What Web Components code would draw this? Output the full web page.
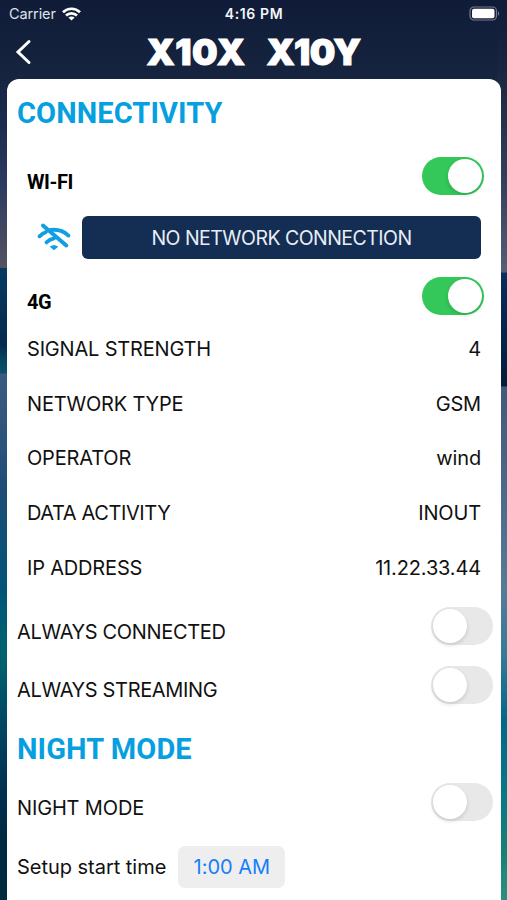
<!DOCTYPE html>
<html lang="en">
<head>
<meta charset="utf-8">
<title>Connectivity</title>
<style>
  html, body {
    margin: 0;
    height: 100%;
    overflow: hidden;
  }
  body {
    font-family: Inter, "Liberation Sans", sans-serif;
    color: #111;
  }
</style>
</head>
<body>
<app-screen>
  <status-bar slot="top" carrier="Carrier" time="4:16 PM"></status-bar>
  <nav-header slot="top"><span style="letter-spacing: 0.5px">X10X</span><span>X10Y</span></nav-header>

  <section-title style="height: 68px">CONNECTIVITY</section-title>
  <switch-row class="device" on>WI-FI</switch-row>
  <network-banner>NO NETWORK CONNECTION</network-banner>
  <switch-row class="device short" on>4G</switch-row>
  <info-row value="4">SIGNAL STRENGTH</info-row>
  <info-row value="GSM">NETWORK TYPE</info-row>
  <info-row value="wind">OPERATOR</info-row>
  <info-row value="INOUT" style="letter-spacing: -0.4px">DATA ACTIVITY</info-row>
  <info-row value="11.22.33.44">IP ADDRESS</info-row>
  <switch-row style="margin-top: 2px; letter-spacing: -0.35px">ALWAYS CONNECTED</switch-row>
  <switch-row style="letter-spacing: -0.35px">ALWAYS STREAMING</switch-row>
  <section-title style="height: 58.6px; --drop: 11px">NIGHT MODE</section-title>
  <switch-row>NIGHT MODE</switch-row>
  <time-row value="1:00 AM">Setup start time</time-row>
</app-screen>

<script>
class AppScreen extends HTMLElement {
  constructor() {
    super();
    this.attachShadow({ mode: 'open' });
    this.shadowRoot.innerHTML = `
      <style>
        :host {
          display: flex;
          flex-direction: column;
          height: 900px;
          /* left edge, right edge, header */
          background:
            linear-gradient(#101c38 0, #15233f 70px, #1c2d50 130px, #2b3b62 185px, #45495f 235px, #535460 268px,
              #083a61 268px, #06294f 345px, #064862 362px, #0b4f6a 373px, #3a5a80 374px, #30557c 430px, #1d4c76 490px,
              #005577 590px, #00636f 655px, #004a66 715px, #00304f 790px, #00283f 850px, #002b3c 900px) left / 10px 100% no-repeat,
            linear-gradient(#101c38 0, #18263f 70px, #27344f 130px, #35425f 190px, #4c5570 245px, #555f78 272px,
              #0a2d5c 273px, #07264f 320px, #031c3d 386px, #41597c 387px, #4c678a 480px, #567b99 590px, #357b96 655px,
              #00688a 720px, #087a85 800px, #168078 850px, #2b9080 900px) right / 10px 100% no-repeat,
            linear-gradient(#101c37 0, #15233f 70px, #182744 100px);
        }
        .card {
          flex: 1;
          display: flex;
          flex-direction: column;
          margin: 0 6px 0 7px;
          border-radius: 12px 12px 0 0;
          background: #fff;
          overflow: hidden;
        }
      </style>
      <slot name="top"></slot>
      <div class="card"><slot></slot></div>
`;
  }
}

class StatusBar extends HTMLElement {
  constructor() {
    super();
    this.attachShadow({ mode: 'open' });
    this.shadowRoot.innerHTML = `
      <style>
        :host {
          display: grid;
          grid-template-columns: 1fr auto 1fr;
          align-items: center;
          height: 27px;
          padding: 0 7px 0 9px;
          color: #f4f6fa;
          font-size: 14.5px;
        }
        .left {
          display: flex;
          align-items: center;
          gap: 6px;
          color: #dfe3ea;
          letter-spacing: -0.1px;
        }
        .time {
          margin-right: 1px;
          font-size: 14px;
          font-weight: 600;
          letter-spacing: 0.6px;
        }
        .battery {
          justify-self: end;
        }
        svg {
          display: block;
        }
      </style>
      <div class="left">
        <span class="carrier"></span>
        <svg width="19" height="14" viewBox="0 0 19 14" fill="none" stroke="#fff" stroke-width="2.7">
          <path d="M1 5.2C5.8.6 13.2.6 18 5.2M4 8.6C7.2 5.6 11.8 5.6 15 8.6"/>
          <path d="M9.5 13.6 6.4 10.6C8.2 9.1 10.8 9.1 12.6 10.6Z" fill="#fff" stroke="none"/>
        </svg>
      </div>
      <span class="time"></span>
      <svg class="battery" width="31" height="15" viewBox="0 0 31 15">
        <rect x="1" y="1" width="26.5" height="13" rx="4" fill="none" stroke="#747b8c" stroke-width="1.2"/>
        <rect x="3" y="2.7" width="22.5" height="9.6" rx="2" fill="#fff"/>
        <path d="M29 5.2c1.6.7 1.6 3.9 0 4.6z" fill="#747b8c"/>
      </svg>
`;
  }

  connectedCallback() {
    this.shadowRoot.querySelector('.carrier').textContent = this.getAttribute('carrier');
    this.shadowRoot.querySelector('.time').textContent = this.getAttribute('time');
  }
}

class NavHeader extends HTMLElement {
  constructor() {
    super();
    this.attachShadow({ mode: 'open' });
    this.shadowRoot.innerHTML = `
      <style>
        :host {
          display: grid;
          grid-template-columns: 40px 1fr 40px;
          align-items: center;
          height: 52px;
        }
        svg {
          margin: -2px 0 0 15px;
        }
        .names {
          display: flex;
          justify-content: center;
          gap: 21px;
          color: #fff;
          font-size: 36px;
          line-height: 50px;
          height: 52px;
          font-weight: 900;
          letter-spacing: -0.7px;
          -webkit-text-stroke: 1px #fff;
        }
      </style>
      <svg width="18" height="26" viewBox="0 0 18 26" fill="none" stroke="#fff" stroke-width="3" stroke-linecap="round">
        <path d="M14 2.5 3 13 14 23.5"/>
      </svg>
      <div class="names"><slot></slot></div>
`;
  }
}

class SectionTitle extends HTMLElement {
  constructor() {
    super();
    this.attachShadow({ mode: 'open' });
    this.shadowRoot.innerHTML = `
      <style>
        :host {
          display: flex;
          align-items: center;
          box-sizing: border-box;
          flex: none;
          padding: var(--drop, 0) 10px 0;
          color: #069fe0;
          font-family: Roboto, sans-serif;
          font-size: 29px;
          font-weight: 700;
          letter-spacing: 0.1px;
        }
      </style>
      <slot></slot>
`;
  }
}

class ToggleSwitch extends HTMLElement {
  constructor() {
    super();
    this.attachShadow({ mode: 'open' });
    this.shadowRoot.innerHTML = `
      <style>
        :host {
          display: flex;
          align-items: center;
          box-sizing: border-box;
          width: 62.5px;
          height: 38px;
          padding: 0 2px;
          border-radius: 19px;
          background: #e8e8e9;
        }
        :host([on]) {
          justify-content: flex-end;
          background: #34c759;
        }
        i {
          width: 34px;
          height: 34px;
          border-radius: 50%;
          background: #fff;
          box-shadow: 0 2px 4px rgba(0, 0, 0, 0.14);
        }
      </style>
      <i></i>
`;
  }
}

class SwitchRow extends HTMLElement {
  constructor() {
    super();
    this.attachShadow({ mode: 'open' });
    this.shadowRoot.innerHTML = `
      <style>
        :host {
          display: flex;
          align-items: center;
          justify-content: space-between;
          flex: none;
          box-sizing: border-box;
          height: 58.6px;
          padding: 0 8px 0 10px;
          font-size: 20px;
          letter-spacing: -0.15px;
        }
        span {
          padding-top: 11px;
        }
        :host(.device) {
          height: 58px;
          padding: 0 17px 0 20px;
          color: #000;
          font-family: Roboto, sans-serif;
          font-weight: 700;
          letter-spacing: -0.4px;
        }
        :host(.short) {
          height: 54px;
          padding-top: 4px;
        }
      </style>
      <span><slot></slot></span>
      <toggle-switch></toggle-switch>
`;
  }

  connectedCallback() {
    this.shadowRoot.querySelector('toggle-switch').toggleAttribute('on', this.hasAttribute('on'));
  }
}

class NetworkBanner extends HTMLElement {
  constructor() {
    super();
    this.attachShadow({ mode: 'open' });
    this.shadowRoot.innerHTML = `
      <style>
        :host {
          display: flex;
          align-items: center;
          flex: none;
          box-sizing: border-box;
          gap: 10px;
          height: 62px;
          padding: 2px 20px 0 29px;
        }
        div {
          flex: 1;
          height: 43px;
          line-height: 44px;
          border-radius: 6px;
          background: #142d52;
          color: #e8edf6;
          text-align: center;
          font-size: 19.5px;
          letter-spacing: -0.53px;
        }
      </style>
      <svg width="36" height="30" viewBox="0 0 36 30" fill="none" stroke="#109fe2" stroke-width="3.8" stroke-linecap="round">
        <path d="M3.5 14.3C5.5 12.3 7.5 11 10 10M14.5 8C21.5 7 27.5 9 32.5 13.6"/>
        <path d="M10.5 20.4C12.6 18.4 15 17 18 16.4"/>
        <path d="M7 3.6 30.3 23.5" stroke-width="4"/>
        <path d="M18 28.3 13.8 24.8C16 22.8 20 22.8 22.2 24.8Z" fill="#109fe2" stroke="none"/>
      </svg>
      <div><slot></slot></div>
`;
  }
}

class InfoRow extends HTMLElement {
  constructor() {
    super();
    this.attachShadow({ mode: 'open' });
    this.shadowRoot.innerHTML = `
      <style>
        :host {
          display: flex;
          align-items: center;
          justify-content: space-between;
          flex: none;
          box-sizing: border-box;
          height: 54.8px;
          padding: 1px 20px 0;
          font-size: 20px;
          letter-spacing: -0.18px;
        }
        .value {
          letter-spacing: -0.15px;
        }
      </style>
      <slot></slot>
      <span class="value"></span>
`;
  }

  connectedCallback() {
    this.shadowRoot.querySelector('.value').textContent = this.getAttribute('value');
  }
}

class TimeRow extends HTMLElement {
  constructor() {
    super();
    this.attachShadow({ mode: 'open' });
    this.shadowRoot.innerHTML = `
      <style>
        :host {
          display: flex;
          align-items: center;
          flex: none;
          gap: 12px;
          height: 71px;
          padding: 0 10px;
          font-size: 20px;
          letter-spacing: -0.03px;
        }
        button {
          width: 107px;
          height: 42px;
          padding: 0;
          border: 0;
          border-radius: 7px;
          background: #eeeeef;
          color: #147efb;
          font: inherit;
          letter-spacing: inherit;
        }
      </style>
      <slot></slot>
      <button></button>
`;
  }

  connectedCallback() {
    this.shadowRoot.querySelector('button').textContent = this.getAttribute('value');
  }
}

customElements.define('app-screen', AppScreen);
customElements.define('status-bar', StatusBar);
customElements.define('nav-header', NavHeader);
customElements.define('section-title', SectionTitle);
customElements.define('toggle-switch', ToggleSwitch);
customElements.define('switch-row', SwitchRow);
customElements.define('network-banner', NetworkBanner);
customElements.define('info-row', InfoRow);
customElements.define('time-row', TimeRow);
</script>
</body>
</html>
